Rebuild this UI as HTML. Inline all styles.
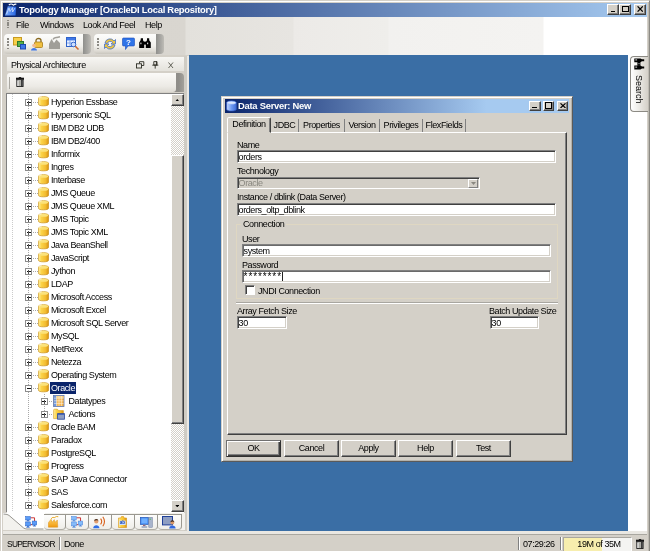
<!DOCTYPE html>
<html><head><meta charset="utf-8"><title>Topology Manager</title>
<style>
html,body{margin:0;padding:0}
body{width:650px;height:551px;overflow:hidden;background:#d4d0c8;position:relative;
 font-family:"Liberation Sans",sans-serif;font-size:9px;letter-spacing:-0.42px;color:#000;line-height:12px}
div,i,svg,span{position:absolute;box-sizing:border-box}
#app{left:0;top:0;width:650px;height:551px;overflow:hidden;background:#d4d0c8;filter:blur(0.3px)}
i{display:block}
.t{white-space:nowrap}
/* main title */
#title{left:3px;top:3px;width:644px;height:14px;background:linear-gradient(90deg,#0a246a 0%,#a6caf0 100%)}
#title .t{left:16px;top:1px;color:#fff;font-weight:bold;font-size:9.4px;letter-spacing:-0.25px}
.cb{width:12px;height:10px;background:#d4d0c8;border:1px solid;border-color:#fff #404040 #404040 #fff;box-shadow:inset -1px -1px 0 #808080}
/* menubar+toolbar gradient */
#bars{left:3px;top:17px;width:644px;height:38px;background:linear-gradient(90deg,#d6d3cd 0px,#d9d6d0 182px,#e3e1dc 183px,#e7e5e1 290px,#eceae7 291px,#efeeeb 385px,#f2f1ef 386px,#f4f3f1 540px,#fff 541px)}
.menu{top:2px;font-size:9px}
.tb{top:17px;height:20px;border-radius:4px 0 0 4px;background:linear-gradient(180deg,#fdfdfc,#f1f0ec 60%,#dedbd4 85%,#c9c6be)}
.tb:after{content:"";position:absolute;right:-8px;top:0;width:8px;height:20px;border-radius:0 4px 4px 0;background:linear-gradient(90deg,#8f8f8c,#a9a8a4 60%,#bebcb6)}
.grip{left:3px;top:4px;width:2px;height:12px;background:repeating-linear-gradient(180deg,#8c8a84 0 1.6px,transparent 1.6px 3.25px)}
/* left panel */
#ph{left:7px;top:57px;width:178px;height:14px;background:linear-gradient(180deg,#f7f6f3,#e4e2dc)}
#ptb{left:7px;top:73px;width:169px;height:19px;border-radius:3px 0 3px 0;background:linear-gradient(180deg,#fbfaf8,#eceae5 70%,#dddad3)}
#ptbs{left:173px;top:73px;width:11px;height:19px;border-radius:0 4px 0 0;background:linear-gradient(90deg,#8f8d89,#8f8d89 50%,#a3a19b)}
#tree{left:6px;top:93px;width:166px;height:419px;background:#fff;border-left:1px solid #808080;border-top:1px solid #808080;overflow:hidden}
#treein{left:-7px;top:-94px;width:200px;height:520px}
.tx{height:13px;line-height:13px;padding:0 1px;white-space:nowrap}
.sel{background:#0a246a;color:#fff;margin-top:-.3px;height:12px;line-height:13.4px}
.ic{display:block}
.hl{height:1px;background:repeating-linear-gradient(90deg,#a8a8a8 0 1px,transparent 1px 2px)}
.vl{width:1px;background:repeating-linear-gradient(180deg,#a8a8a8 0 1px,transparent 1px 2px)}
.bx{width:7px;height:7px;border:1px solid #8c8c8c;background:#fff}
.bx .h{left:.5px;top:2px;width:4px;height:1px;background:#111}
.bx .v{left:2px;top:.5px;width:1px;height:4px;background:#555}
/* scrollbar */
#sb{left:171px;top:94px;width:13px;height:418px;background:repeating-conic-gradient(#fff 0 25%,#d4d0c8 0 50%) 0 0/2px 2px}
.sbb{left:0;width:13px;height:12px;background:#d4d0c8;border:1px solid;border-color:#fff #404040 #404040 #fff;box-shadow:inset -1px -1px 0 #808080}
#thumb{left:0;top:61px;width:13px;height:269px;background:#d4d0c8;border:1px solid;border-color:#fff #404040 #404040 #fff;box-shadow:inset -1px -1px 0 #808080}
/* bottom tabs */
#tabs{left:7px;top:513px;width:178px;height:17px;background:#f3f2ee}
.bt{top:1px;height:16px;border-top:1px solid #9a9890;width:23px;border-right:1px solid #9a9890;border-bottom:1px solid #b0aea6;border-radius:0 0 4px 4px;background:linear-gradient(180deg,#fdfdfc,#efeee9)}
/* desktop */
#desk{left:189px;top:55px;width:439px;height:476px;background:#3a6ea5}
#rstrip{left:628px;top:55px;width:19px;height:476px;background:#fff}
/* status */
#status{left:0;top:536px;width:650px;height:15px}
.ssep{top:1px;width:2px;height:13px;border-left:1px solid #808080;border-right:1px solid #fff}
/* dialog */
#dlg{left:221px;top:96px;width:352px;height:366px;background:#d4d0c8;border:1px solid;border-color:#d4d0c8 #5a5a5a #5a5a5a #d4d0c8;box-shadow:inset 1px 1px 0 #fff,inset -1px -1px 0 #b4b1aa}
#dtitle{left:3px;top:2px;width:344px;height:14px;background:linear-gradient(90deg,#0a246a 0%,#a6caf0 76%,#a6caf0 100%)}
#dtitle .t{left:13px;top:1px;color:#fff;font-weight:bold;font-size:9.4px;letter-spacing:-0.25px}
.dtab{top:22px;height:13px;border-right:1px solid #808080;line-height:13px;text-align:center}
#dtab0{left:5px;top:20px;width:44px;height:16px;background:#d4d0c8;border:1px solid;border-color:#fff #404040 transparent #fff;border-radius:2px 2px 0 0;line-height:13px;text-align:center;box-shadow:inset -1px 0 0 #808080}
#pane{left:5px;top:35px;width:340px;height:303px;border:1px solid;border-color:#fff #404040 #404040 #fff;box-shadow:inset -1px -1px 0 #808080}
.lb{white-space:nowrap}
.in{height:13px;background:#fff;border:1px solid;border-color:#808080 #fff #fff #808080;box-shadow:inset 1px 1px 0 #404040,inset -1px -1px 0 #d4d0c8;line-height:12px;padding-left:.6px;white-space:nowrap}
.btn{top:343px;width:55px;height:17px;border:1px solid;border-color:#fff #404040 #404040 #fff;box-shadow:inset -1px -1px 0 #808080;text-align:center;line-height:14px}
</style></head>
<body>
<div id="app">
<svg width="0" height="0" style="position:absolute"><defs>
 <linearGradient id="gy" x1="0" x2="1" y1="0" y2="0"><stop offset="0" stop-color="#fff0a0"/><stop offset=".3" stop-color="#fbd348"/><stop offset=".7" stop-color="#f3bc30"/><stop offset="1" stop-color="#d8920f"/></linearGradient>
 <linearGradient id="gb" x1="0" x2="1" y1="0" y2="0"><stop offset="0" stop-color="#c4d8ff"/><stop offset=".5" stop-color="#6f9af2"/><stop offset="1" stop-color="#3f6cd8"/></linearGradient>
 <g id="cyl"><path d="M0.4 2.3 C0.4 0.2 10.6 0.2 10.6 2.3 V8.2 C10.6 10.4 0.4 10.4 0.4 8.2 Z" fill="url(#gy)" stroke="#c9901c" stroke-width=".7"/><ellipse cx="5.5" cy="2.3" rx="4.7" ry="1.5" fill="#fbe27a"/><path d="M1.2 2 Q2 1 3.6 .9" stroke="#fffbe0" stroke-width=".9" fill="none"/></g>
 <g id="bcyl"><path d="M0.5 2.5 C0.5 0.3 9.5 0.3 9.5 2.5 V8.5 C9.5 10.7 0.5 10.7 0.5 8.5 Z" fill="url(#gb)" stroke="#2f58c0" stroke-width=".6"/><ellipse cx="5" cy="2.5" rx="4" ry="1.4" fill="#dbe8ff" stroke="#7aa0f0" stroke-width=".4"/></g>
 <g id="dt"><rect x="0.5" y="0.5" width="10.5" height="11" fill="#f5b24a" stroke="#5a78b8" stroke-width=".8"/><rect x="1" y="1" width="2.6" height="10" fill="#6f98e0"/><rect x="3.6" y="1" width="7" height="2" fill="#f8cf80"/><path d="M3.6 1V11M6 1V11M8.4 1V11M1 3.2H10.6M1 5.8H10.6M1 8.4H10.6" stroke="#fdf3dc" stroke-width=".6"/></g>
 <g id="act"><path d="M.6 2.2 Q.6 1.2 1.6 1.2 H4.4 L5.6 2.6 H10.4 V10.6 H.6 Z" fill="url(#gy)" stroke="#d39a1e" stroke-width=".6"/><rect x="4.6" y="5.6" width="6.8" height="5.6" fill="#8e9ec2" stroke="#27479c" stroke-width=".8"/><rect x="5" y="6" width="6" height="1" fill="#4a68b8"/></g>
 <g id="bino"><path d="M1.8 0.3 H4 V2.2 L5.2 4 V10 H0.2 V4.6 L1.6 2.2 Z M8 0.3 H10.2 V2.2 L11.8 4.6 V10 H6.8 V4 L8 2.2 Z" fill="#000"/><rect x="5" y="3.6" width="2" height="3" fill="#000"/><rect x="1.3" y="4.6" width="1.2" height="1.6" fill="#fff" opacity=".8"/><rect x="8" y="4.6" width="1.2" height="1.6" fill="#fff" opacity=".8"/></g>
 <g id="trash"><rect x="0" y=".7" width="8" height="2.1" fill="#151515"/><rect x="2.8" y="0" width="2.4" height="1" fill="#222"/><rect x=".8" y="2.8" width="6.3" height="6.7" fill="#fafafa" stroke="#151515" stroke-width=".9"/><rect x="2.5" y="3.3" width="2.4" height="5.8" fill="#a6a6a0"/><rect x="5.1" y="3" width="1.6" height="6.3" fill="#2a2a2a"/></g>
</defs></svg>

<!-- outer frame highlights -->
<div style="left:0;top:0;width:650px;height:556px;border:1px solid;border-color:#d4d0c8 #8c8a84 #8c8a84 #d4d0c8;box-shadow:inset 1px 1px 0 #fff,inset -1px -1px 0 #bdbab2"></div>

<div id="title">
 <svg style="left:1px;top:0" width="14" height="14" viewBox="0 0 14 14"><defs><linearGradient id="gt" x1="0" x2="1" y1="0" y2="0"><stop offset="0" stop-color="#7fb0ff"/><stop offset="1" stop-color="#2563e0"/></linearGradient></defs><path d="M1 12.4 L3.8 3.2 L12.2 3.8 L11.6 12.4 Z" fill="url(#gt)"/><path d="M2.6 11 L5 5 L6 8.5 L8.6 4.6 L8.6 9 L11 5" stroke="#e8f0ff" stroke-width=".8" fill="none" opacity=".85"/><path d="M4.8 2 Q6.5 .6 8.2 1.2 Q9 1.6 9.6 2.2 Q10.5 1 12.4 1.2" stroke="#fff" stroke-width="1.1" fill="none"/></svg>
 <div class="t">Topology Manager [OracleDI Local Repository]</div>
 <div class="cb" style="left:604.3px;top:1.2px;height:10.4px"><i style="left:2.5px;top:5.6px;width:4.5px;height:1.7px;background:#000"></i></div>
 <div class="cb" style="left:616.2px;top:1.2px;height:10.4px"><i style="left:1.6px;top:.8px;width:7.2px;height:6.4px;border:1px solid #000;border-top-width:1.6px"></i></div>
 <div class="cb" style="left:630.8px;top:1.2px;height:10.4px"><svg style="left:2px;top:1.2px" width="6.4" height="6" viewBox="0 0 6.4 6"><path d="M.6 .4L5.8 5.6M5.8 .4L.6 5.6" stroke="#000" stroke-width="1.3"/></svg></div>
</div>

<div id="bars">
 <i style="left:4px;top:3.4px;width:1.8px;height:8.4px;background:repeating-linear-gradient(180deg,#8c8a84 0 1.3px,transparent 1.3px 2.25px)"></i>
 <div class="t menu" style="left:13px">File</div>
 <div class="t menu" style="left:37px">Windows</div>
 <div class="t menu" style="left:80px">Look And Feel</div>
 <div class="t menu" style="left:142px">Help</div>
 <div class="tb" style="left:1px;width:79px"><i class="grip"></i>
  <svg style="left:9px;top:3px" width="14" height="13" viewBox="0 0 14 13"><rect x=".5" y=".5" width="8" height="7.5" fill="#f7d04a" stroke="#c89a20"/><rect x="4.5" y="4.5" width="6" height="5" fill="#59b04a" stroke="#2f7a2a"/><rect x="7.5" y="7.5" width="5" height="4.5" fill="#3f78e8" stroke="#1d48b0"/></svg>
  <svg style="left:27px;top:3px" width="13" height="14" viewBox="0 0 13 14"><path d="M5 6 V3.5 C5 0.8 10 0.8 10 3.5 V6" fill="none" stroke="#8a6a20" stroke-width="1.3"/><rect x="3.5" y="5" width="8" height="5.5" rx="1" fill="#f0c040" stroke="#a87c18" stroke-width=".8"/><circle cx="3" cy="8.5" r="1.8" fill="#f0b890"/><path d="M0 13.5 C0 10 6 10 6 13.5 Z" fill="#3f78e8"/></svg>
  <svg style="left:44px;top:2px" width="14" height="14" viewBox="0 0 14 14"><path d="M1 13 V8 L3.5 3 L6 7 L8.5 3.5 L12 7 V13 Z" fill="#a09e98"/><path d="M5 3.5 Q6 1 9 1.5 L12 0.8" stroke="#a09e98" stroke-width="1.5" fill="none"/></svg>
  <svg style="left:62px;top:3px" width="14" height="14" viewBox="0 0 14 14"><rect x=".5" y=".5" width="9" height="9" fill="#e8f0ff" stroke="#2f62c8"/><rect x="1" y="1" width="8" height="2.4" fill="#3f78e8"/><path d="M1 6H9M4 3.5V9" stroke="#6f98e8" stroke-width=".8"/><circle cx="7.5" cy="7.5" r="2.3" fill="#cfe0ff" stroke="#2f62c8" stroke-width=".9"/><path d="M9.3 9.3 L12.5 12.5" stroke="#d06a30" stroke-width="1.6"/></svg>
 </div>
 <div class="tb" style="left:91px;width:62px"><i class="grip"></i>
  <svg style="left:9px;top:3px" width="14" height="14" viewBox="0 0 14 14"><path d="M2 6 A5 5 0 0 1 11 4 L12.5 2.5 V7 H8 L9.6 5.4 A3.2 3.2 0 0 0 4.2 6.5 Z" fill="#f3c83a" stroke="#3f6fd0" stroke-width=".8"/><path d="M12 8 A5 5 0 0 1 3 10 L1.5 11.5 V7 H6 L4.4 8.6 A3.2 3.2 0 0 0 9.8 7.5 Z" fill="#f3c83a" stroke="#3f6fd0" stroke-width=".8"/></svg>
  <svg style="left:28px;top:3px" width="13" height="14" viewBox="0 0 13 14"><path d="M1.5 1 H11.5 Q12.5 1 12.5 2 V8 Q12.5 9 11.5 9 H6 L3.5 12.5 V9 H1.5 Q.5 9 .5 8 V2 Q.5 1 1.5 1Z" fill="#2f74e8" stroke="#1b4cb8" stroke-width=".6"/><text x="6.5" y="7.8" font-family="Liberation Sans,sans-serif" font-size="8" font-weight="bold" fill="#fff" text-anchor="middle" letter-spacing="0">?</text></svg>
  <svg style="left:44.5px;top:3.5px" width="12" height="10.5" viewBox="0 0 12 10.5"><use href="#bino"/></svg>
 </div>
</div>

<!-- left panel -->
<div id="ph" style="height:13.5px"><div class="t" style="left:4px;top:1.6px">Physical Architecture</div>
 <svg style="left:129px;top:4px" width="9" height="8" viewBox="0 0 9 8"><path d="M3.5 2.5V.7H7.8V4.5H6" fill="none" stroke="#2a2a20" stroke-width=".9"/><rect x=".5" y="2.8" width="5" height="4.2" fill="none" stroke="#2a2a20" stroke-width=".9"/></svg>
 <svg style="left:145px;top:4px" width="7" height="8" viewBox="0 0 7 8"><path d="M1.8 .6H5V4H1.8Z" fill="none" stroke="#2a2a20" stroke-width=".9"/><path d="M.3 4.2H6.3M3.2 4.2V7.6M4.4 .6V4" stroke="#2a2a20" stroke-width=".9"/></svg>
 <svg style="left:161px;top:5px" width="6" height="7" viewBox="0 0 6 7"><path d="M.5 .5L5 6M5 .5L.5 6" stroke="#55554a" stroke-width=".9"/></svg>
</div>
<div id="ptbs"></div>
<div id="ptb"><i style="left:2.3px;top:4.4px;width:1px;height:11.6px;background:#aaa8a2"></i>
 <svg style="left:9px;top:4px" width="8" height="10" viewBox="0 0 8 10"><use href="#trash"/></svg>
</div>
<div id="tree"><div id="treein">
 <div class="vl" style="left:12px;top:94px;height:420px;opacity:.6"></div>
 <div class="vl" style="left:28px;top:94px;height:420px"></div>
 <div class="vl" style="left:43.5px;top:394px;height:24px"></div>
 <svg class="ic" style="left:38px;top:83.2px" width="11" height="10.5" viewBox="0 0 11 10.5"><use href="#cyl"/></svg>
<div class="hl" style="left:29px;top:102px;width:9px"></div>
<div class="bx" style="left:25px;top:99px"><i class="h"></i><i class="v"></i></div>
<svg class="ic" style="left:38px;top:96.2px" width="11" height="10.5" viewBox="0 0 11 10.5"><use href="#cyl"/></svg>
<div class="tx" style="left:50px;top:96px">Hyperion Essbase</div>
<div class="hl" style="left:29px;top:115px;width:9px"></div>
<div class="bx" style="left:25px;top:112px"><i class="h"></i><i class="v"></i></div>
<svg class="ic" style="left:38px;top:109.2px" width="11" height="10.5" viewBox="0 0 11 10.5"><use href="#cyl"/></svg>
<div class="tx" style="left:50px;top:109px">Hypersonic SQL</div>
<div class="hl" style="left:29px;top:128px;width:9px"></div>
<div class="bx" style="left:25px;top:125px"><i class="h"></i><i class="v"></i></div>
<svg class="ic" style="left:38px;top:122.2px" width="11" height="10.5" viewBox="0 0 11 10.5"><use href="#cyl"/></svg>
<div class="tx" style="left:50px;top:122px">IBM DB2 UDB</div>
<div class="hl" style="left:29px;top:141px;width:9px"></div>
<div class="bx" style="left:25px;top:138px"><i class="h"></i><i class="v"></i></div>
<svg class="ic" style="left:38px;top:135.2px" width="11" height="10.5" viewBox="0 0 11 10.5"><use href="#cyl"/></svg>
<div class="tx" style="left:50px;top:135px">IBM DB2/400</div>
<div class="hl" style="left:29px;top:154px;width:9px"></div>
<div class="bx" style="left:25px;top:151px"><i class="h"></i><i class="v"></i></div>
<svg class="ic" style="left:38px;top:148.2px" width="11" height="10.5" viewBox="0 0 11 10.5"><use href="#cyl"/></svg>
<div class="tx" style="left:50px;top:148px">Informix</div>
<div class="hl" style="left:29px;top:167px;width:9px"></div>
<div class="bx" style="left:25px;top:164px"><i class="h"></i><i class="v"></i></div>
<svg class="ic" style="left:38px;top:161.2px" width="11" height="10.5" viewBox="0 0 11 10.5"><use href="#cyl"/></svg>
<div class="tx" style="left:50px;top:161px">Ingres</div>
<div class="hl" style="left:29px;top:180px;width:9px"></div>
<div class="bx" style="left:25px;top:177px"><i class="h"></i><i class="v"></i></div>
<svg class="ic" style="left:38px;top:174.2px" width="11" height="10.5" viewBox="0 0 11 10.5"><use href="#cyl"/></svg>
<div class="tx" style="left:50px;top:174px">Interbase</div>
<div class="hl" style="left:29px;top:193px;width:9px"></div>
<div class="bx" style="left:25px;top:190px"><i class="h"></i><i class="v"></i></div>
<svg class="ic" style="left:38px;top:187.2px" width="11" height="10.5" viewBox="0 0 11 10.5"><use href="#cyl"/></svg>
<div class="tx" style="left:50px;top:187px">JMS Queue</div>
<div class="hl" style="left:29px;top:206px;width:9px"></div>
<div class="bx" style="left:25px;top:203px"><i class="h"></i><i class="v"></i></div>
<svg class="ic" style="left:38px;top:200.2px" width="11" height="10.5" viewBox="0 0 11 10.5"><use href="#cyl"/></svg>
<div class="tx" style="left:50px;top:200px">JMS Queue XML</div>
<div class="hl" style="left:29px;top:219px;width:9px"></div>
<div class="bx" style="left:25px;top:216px"><i class="h"></i><i class="v"></i></div>
<svg class="ic" style="left:38px;top:213.2px" width="11" height="10.5" viewBox="0 0 11 10.5"><use href="#cyl"/></svg>
<div class="tx" style="left:50px;top:213px">JMS Topic</div>
<div class="hl" style="left:29px;top:232px;width:9px"></div>
<div class="bx" style="left:25px;top:229px"><i class="h"></i><i class="v"></i></div>
<svg class="ic" style="left:38px;top:226.2px" width="11" height="10.5" viewBox="0 0 11 10.5"><use href="#cyl"/></svg>
<div class="tx" style="left:50px;top:226px">JMS Topic XML</div>
<div class="hl" style="left:29px;top:245px;width:9px"></div>
<div class="bx" style="left:25px;top:242px"><i class="h"></i><i class="v"></i></div>
<svg class="ic" style="left:38px;top:239.2px" width="11" height="10.5" viewBox="0 0 11 10.5"><use href="#cyl"/></svg>
<div class="tx" style="left:50px;top:239px">Java BeanShell</div>
<div class="hl" style="left:29px;top:258px;width:9px"></div>
<div class="bx" style="left:25px;top:255px"><i class="h"></i><i class="v"></i></div>
<svg class="ic" style="left:38px;top:252.2px" width="11" height="10.5" viewBox="0 0 11 10.5"><use href="#cyl"/></svg>
<div class="tx" style="left:50px;top:252px">JavaScript</div>
<div class="hl" style="left:29px;top:271px;width:9px"></div>
<div class="bx" style="left:25px;top:268px"><i class="h"></i><i class="v"></i></div>
<svg class="ic" style="left:38px;top:265.2px" width="11" height="10.5" viewBox="0 0 11 10.5"><use href="#cyl"/></svg>
<div class="tx" style="left:50px;top:265px">Jython</div>
<div class="hl" style="left:29px;top:284px;width:9px"></div>
<div class="bx" style="left:25px;top:281px"><i class="h"></i><i class="v"></i></div>
<svg class="ic" style="left:38px;top:278.2px" width="11" height="10.5" viewBox="0 0 11 10.5"><use href="#cyl"/></svg>
<div class="tx" style="left:50px;top:278px">LDAP</div>
<div class="hl" style="left:29px;top:297px;width:9px"></div>
<div class="bx" style="left:25px;top:294px"><i class="h"></i><i class="v"></i></div>
<svg class="ic" style="left:38px;top:291.2px" width="11" height="10.5" viewBox="0 0 11 10.5"><use href="#cyl"/></svg>
<div class="tx" style="left:50px;top:291px">Microsoft Access</div>
<div class="hl" style="left:29px;top:310px;width:9px"></div>
<div class="bx" style="left:25px;top:307px"><i class="h"></i><i class="v"></i></div>
<svg class="ic" style="left:38px;top:304.2px" width="11" height="10.5" viewBox="0 0 11 10.5"><use href="#cyl"/></svg>
<div class="tx" style="left:50px;top:304px">Microsoft Excel</div>
<div class="hl" style="left:29px;top:323px;width:9px"></div>
<div class="bx" style="left:25px;top:320px"><i class="h"></i><i class="v"></i></div>
<svg class="ic" style="left:38px;top:317.2px" width="11" height="10.5" viewBox="0 0 11 10.5"><use href="#cyl"/></svg>
<div class="tx" style="left:50px;top:317px">Microsoft SQL Server</div>
<div class="hl" style="left:29px;top:336px;width:9px"></div>
<div class="bx" style="left:25px;top:333px"><i class="h"></i><i class="v"></i></div>
<svg class="ic" style="left:38px;top:330.2px" width="11" height="10.5" viewBox="0 0 11 10.5"><use href="#cyl"/></svg>
<div class="tx" style="left:50px;top:330px">MySQL</div>
<div class="hl" style="left:29px;top:349px;width:9px"></div>
<div class="bx" style="left:25px;top:346px"><i class="h"></i><i class="v"></i></div>
<svg class="ic" style="left:38px;top:343.2px" width="11" height="10.5" viewBox="0 0 11 10.5"><use href="#cyl"/></svg>
<div class="tx" style="left:50px;top:343px">NetRexx</div>
<div class="hl" style="left:29px;top:362px;width:9px"></div>
<div class="bx" style="left:25px;top:359px"><i class="h"></i><i class="v"></i></div>
<svg class="ic" style="left:38px;top:356.2px" width="11" height="10.5" viewBox="0 0 11 10.5"><use href="#cyl"/></svg>
<div class="tx" style="left:50px;top:356px">Netezza</div>
<div class="hl" style="left:29px;top:375px;width:9px"></div>
<div class="bx" style="left:25px;top:372px"><i class="h"></i><i class="v"></i></div>
<svg class="ic" style="left:38px;top:369.2px" width="11" height="10.5" viewBox="0 0 11 10.5"><use href="#cyl"/></svg>
<div class="tx" style="left:50px;top:369px">Operating System</div>
<div class="hl" style="left:29px;top:388px;width:9px"></div>
<div class="bx" style="left:25px;top:385px"><i class="h"></i></div>
<svg class="ic" style="left:38px;top:382.2px" width="11" height="10.5" viewBox="0 0 11 10.5"><use href="#cyl"/></svg>
<div class="tx sel" style="left:50px;top:382px">Oracle</div>
<div class="hl" style="left:47px;top:401px;width:6px"></div>
<div class="bx" style="left:40.5px;top:398px"><i class="h"></i><i class="v"></i></div>
<svg class="ic" style="left:53px;top:395px" width="12" height="12" viewBox="0 0 12 12"><use href="#dt"/></svg>
<div class="tx" style="left:67.5px;top:395px">Datatypes</div>
<div class="hl" style="left:47px;top:414px;width:6px"></div>
<div class="bx" style="left:40.5px;top:411px"><i class="h"></i><i class="v"></i></div>
<svg class="ic" style="left:53px;top:408px" width="12" height="12" viewBox="0 0 12 12"><use href="#act"/></svg>
<div class="tx" style="left:67.5px;top:408px">Actions</div>
<div class="hl" style="left:29px;top:427px;width:9px"></div>
<div class="bx" style="left:25px;top:424px"><i class="h"></i><i class="v"></i></div>
<svg class="ic" style="left:38px;top:421.2px" width="11" height="10.5" viewBox="0 0 11 10.5"><use href="#cyl"/></svg>
<div class="tx" style="left:50px;top:421px">Oracle BAM</div>
<div class="hl" style="left:29px;top:440px;width:9px"></div>
<div class="bx" style="left:25px;top:437px"><i class="h"></i><i class="v"></i></div>
<svg class="ic" style="left:38px;top:434.2px" width="11" height="10.5" viewBox="0 0 11 10.5"><use href="#cyl"/></svg>
<div class="tx" style="left:50px;top:434px">Paradox</div>
<div class="hl" style="left:29px;top:453px;width:9px"></div>
<div class="bx" style="left:25px;top:450px"><i class="h"></i><i class="v"></i></div>
<svg class="ic" style="left:38px;top:447.2px" width="11" height="10.5" viewBox="0 0 11 10.5"><use href="#cyl"/></svg>
<div class="tx" style="left:50px;top:447px">PostgreSQL</div>
<div class="hl" style="left:29px;top:466px;width:9px"></div>
<div class="bx" style="left:25px;top:463px"><i class="h"></i><i class="v"></i></div>
<svg class="ic" style="left:38px;top:460.2px" width="11" height="10.5" viewBox="0 0 11 10.5"><use href="#cyl"/></svg>
<div class="tx" style="left:50px;top:460px">Progress</div>
<div class="hl" style="left:29px;top:479px;width:9px"></div>
<div class="bx" style="left:25px;top:476px"><i class="h"></i><i class="v"></i></div>
<svg class="ic" style="left:38px;top:473.2px" width="11" height="10.5" viewBox="0 0 11 10.5"><use href="#cyl"/></svg>
<div class="tx" style="left:50px;top:473px">SAP Java Connector</div>
<div class="hl" style="left:29px;top:492px;width:9px"></div>
<div class="bx" style="left:25px;top:489px"><i class="h"></i><i class="v"></i></div>
<svg class="ic" style="left:38px;top:486.2px" width="11" height="10.5" viewBox="0 0 11 10.5"><use href="#cyl"/></svg>
<div class="tx" style="left:50px;top:486px">SAS</div>
<div class="hl" style="left:29px;top:505px;width:9px"></div>
<div class="bx" style="left:25px;top:502px"><i class="h"></i><i class="v"></i></div>
<svg class="ic" style="left:38px;top:499.2px" width="11" height="10.5" viewBox="0 0 11 10.5"><use href="#cyl"/></svg>
<div class="tx" style="left:50px;top:499px">Salesforce.com</div>
</div></div>
<div style="left:6px;top:93px;width:178px;height:1px;background:#808080"></div>
<div id="sb">
 <div class="sbb" style="top:0"><svg style="left:2.8px;top:3.6px" width="4.6" height="2.4" viewBox="0 0 5 3"><path d="M0 3L2.5 0L5 3Z" fill="#000"/></svg></div>
 <div id="thumb"></div>
 <div class="sbb" style="top:405.6px"><svg style="left:2.8px;top:4px" width="4.6" height="2.4" viewBox="0 0 5 3"><path d="M0 0L2.5 3L5 0Z" fill="#000"/></svg></div>
</div>
<div style="left:184px;top:56px;width:2.5px;height:475px;background:#cfccc4"></div>
<div style="left:186.5px;top:56px;width:2.5px;height:475px;background:#ebe9e5"></div>

<div style="left:3px;top:513px;width:4px;height:17px;background:#f3f2ee"></div>
<div style="left:7px;top:512px;width:177px;height:1.5px;background:#fff"></div>
<div id="tabs">
 <svg style="left:-4px;top:0" width="42" height="17" viewBox="-4 0 42 17"><path d="M-4 0 H38 V16 H20 Q17.8 16 16.4 14.8 L2 2.4 Q0.8 1.2 -4 1 Z" fill="#fff"/><path d="M-3.5 1 Q0.8 1.2 2 2.4 L16.4 14.8 Q17.8 16 20 16 H36.5" fill="none" stroke="#8c8a84" stroke-width=".9"/></svg>
 <div class="bt" style="left:36.5px;width:22.5px"></div><div class="bt" style="left:59px;width:22.6px"></div><div class="bt" style="left:81.6px;width:23.4px"></div><div class="bt" style="left:105px;width:23.4px"></div><div class="bt" style="left:128.4px;width:22.8px"></div><div class="bt" style="left:151.2px;width:23.7px"></div>
 <!-- tab icons -->
 <svg style="left:17.8px;top:3.2px" width="12.6" height="12.6" viewBox="0 0 14 14"><path d="M6 2H10.6V6M6 9.6H8" stroke="#c42222" stroke-width="1" fill="none"/><g fill="#5a9cf8" stroke="#2a64c8" stroke-width=".6"><rect x=".8" y=".6" width="5" height="3.8"/><rect x=".6" y="6.6" width="5.4" height="4.4"/><rect x="8" y="5.6" width="5" height="4.4"/></g><g fill="#2a64c8"><rect x="2.4" y="4.4" width="1.8" height="1"/><rect x="1.6" y="5.2" width="3.4" height=".7"/><rect x="2.4" y="11" width="1.8" height="1.2"/><rect x="1.4" y="12.1" width="3.8" height=".8"/><rect x="9.6" y="10" width="1.8" height="1"/><rect x="8.8" y="10.9" width="3.4" height=".7"/></g></svg>
 <svg style="left:41.3px;top:3.2px" width="10.8" height="11.7" viewBox="0 0 12 13"><defs><linearGradient id="gf" x1="0" x2="0" y1="0" y2="1"><stop offset="0" stop-color="#ffd060"/><stop offset="1" stop-color="#f09a10"/></linearGradient></defs><path d="M.4 12.4 V7.4 L3.4 3.6 L4.6 7 L7 4 L8 7 L10.4 4.4 L10.8 12.4 Z" fill="url(#gf)" stroke="#d88a10" stroke-width=".5"/><path d="M3.6 3.2 Q4.4 1 6.6 1.6 Q7.6 2 8.2 1.2 Q9.2 .2 11.4 .8" stroke="#e8a820" stroke-width="1.1" fill="none"/></svg>
 <svg style="left:64.1px;top:3.2px" width="12.6" height="12.6" viewBox="0 0 14 14"><path d="M6 2H10.6V6M6 9.6H8" stroke="#c42222" stroke-width="1" fill="none"/><g fill="#86bcfa" stroke="#4a86dc" stroke-width=".6"><rect x=".8" y=".6" width="5" height="3.8"/><rect x=".6" y="6.6" width="5.4" height="4.4"/><rect x="8" y="5.6" width="5" height="4.4"/></g><g fill="#4a86dc"><rect x="2.4" y="4.4" width="1.8" height="1"/><rect x="1.6" y="5.2" width="3.4" height=".7"/><rect x="2.4" y="11" width="1.8" height="1.2"/><rect x="1.4" y="12.1" width="3.8" height=".8"/><rect x="9.6" y="10" width="1.8" height="1"/><rect x="8.8" y="10.9" width="3.4" height=".7"/></g></svg>
 <svg style="left:86px;top:3px" width="13" height="12.5" viewBox="0 0 13 12.5"><path d="M.2 12.3 C.2 8.2 6.4 8.2 6.4 12.3 Z" fill="#2f6fe8"/><circle cx="3.3" cy="5.4" r="2.1" fill="#e3a070"/><path d="M1.1 5 Q1.3 2.8 3.4 2.9 Q5.4 3 5.4 4.6 Q3.4 3.8 1.1 5Z" fill="#4a3020"/><path d="M7.6 2.6 Q9.8 5.5 7.6 8.4 M9.8 .8 Q13.2 5.5 9.8 10.2" stroke="#d8601a" stroke-width="1.1" fill="none"/></svg>
 <svg style="left:111.3px;top:3.4px" width="9" height="12" viewBox="0 0 9 12"><path d="M.5 2 H2.8 L3.5 .5 H5.5 L6.2 2 H8.5 V11.5 H.5 Z" fill="url(#gy)" stroke="#d8920f" stroke-width=".6"/><rect x="1.3" y="4.6" width="6.4" height="4.4" fill="#cfe0ff"/><text x="4.5" y="8.3" font-family="Liberation Sans,sans-serif" font-size="4.6" font-weight="bold" fill="#1f48b0" text-anchor="middle" letter-spacing="0">ab</text></svg>
 <svg style="left:132.5px;top:4px" width="13" height="12" viewBox="0 0 13 12"><rect x=".4" y=".4" width="8" height="7" fill="#3f88f0" stroke="#2458b8" stroke-width=".7"/><rect x="1.4" y="1.4" width="6" height="5" fill="#6fb0ff"/><rect x="3.2" y="7.4" width="2.4" height="1.8" fill="#7a8aa8"/><rect x="1.6" y="9.2" width="5.6" height="1.6" fill="#9aa6c0"/><rect x="3.4" y="8" width="1" height=".9" fill="#d03030"/><rect x="8.8" y=".3" width="3.6" height="10" fill="#a8b4cc" stroke="#7080a0" stroke-width=".5"/><rect x="9.7" y="1.7" width="1.1" height="1" fill="#30c040"/></svg>
 <svg style="left:154.9px;top:3px" width="14" height="12.5" viewBox="0 0 14 12.5"><rect x=".5" y=".5" width="10" height="8.4" fill="#8e9ec2" stroke="#1f3f98" stroke-width="1"/><path d="M7.2 12.4 C7.2 8.6 13.6 8.6 13.6 12.4 Z" fill="#2f68e0"/><circle cx="10.4" cy="6.6" r="1.9" fill="#d89868"/><path d="M8.4 6.2 Q8.6 4.2 10.5 4.3 Q12.3 4.4 12.3 5.9 Q10.4 5.2 8.4 6.2Z" fill="#3a2418"/></svg>
</div>

<div id="desk"></div>
<div id="rstrip"></div>
<!-- search vertical tab -->
<div style="left:630px;top:56px;width:18px;height:56px;border:1px solid #8c8a84;border-right:0;border-radius:4px 0 0 4px;background:linear-gradient(90deg,#fff,#efeeea 40%,#d4d0c8)">
 <svg style="left:3px;top:1.4px" width="10.5" height="12" viewBox="0 0 10.5 12"><path d="M0.3 0.6 H6.4 L8 1.3 H10.2 V3.3 H8 L6.4 4.2 H0.3 Z M0.3 7.6 H6.4 L8 8.5 H10.2 V10.5 H8 L6.4 11.4 H0.3 Z" fill="#000"/><rect x="3.4" y="4" width="3" height="3.8" fill="#000"/><rect x="1.3" y="1.4" width="1.8" height="1" fill="#fff" opacity=".85"/><rect x="1.3" y="8.6" width="1.8" height="1" fill="#fff" opacity=".85"/><rect x="4.3" y="5.2" width="1.4" height="1" fill="#fff" opacity=".7"/></svg>
 <div class="t" style="left:2px;top:18px;width:12px;height:30px;writing-mode:vertical-rl;line-height:12px;font-size:9px;letter-spacing:0">Search</div>
</div>

<div style="left:3px;top:531px;width:644px;height:2.6px;background:#e9e7e2"></div>
<div style="left:3px;top:534px;width:644px;height:1px;background:#a9a7a0"></div>
<!-- status bar -->
<div id="status">
 <div class="t" style="left:7px;top:2px;letter-spacing:-0.7px;font-size:8.4px">SUPERVISOR</div>
 <i class="ssep" style="left:59px"></i>
 <div class="t" style="left:64px;top:2px">Done</div>
 <i class="ssep" style="left:518px"></i>
 <div class="t" style="left:523px;top:2px">07:29:26</div>
 <i class="ssep" style="left:560px"></i>
 <div style="left:563px;top:1px;width:69px;height:15px;background:linear-gradient(90deg,#f7eeae 0 38px,#f4f4f2 38px);border:1px solid;border-color:#a8a6a0 #fff #fff #a8a6a0;text-align:center;line-height:12px;padding-left:3px" class="t">19M of 35M</div>
 <svg style="left:636px;top:3.2px" width="8" height="10" viewBox="0 0 8 10"><use href="#trash"/></svg>
</div>

<!-- dialog -->
<div id="dlg">
 <div id="dtitle">
  <svg style="left:1px;top:1px" width="11" height="12" viewBox="0 0 10 11"><use href="#bcyl"/></svg>
  <div class="t">Data Server: New</div>
  <div class="cb" style="left:304.3px;top:1.5px;width:11.6px;height:10px"><i style="left:2px;top:5.2px;width:4.6px;height:1.8px;background:#000"></i></div>
  <div class="cb" style="left:317.9px;top:1.5px;width:11.6px;height:10px"><i style="left:1.3px;top:.6px;width:7px;height:6.6px;border:1px solid #000;border-top-width:1.6px"></i></div>
  <div class="cb" style="left:331.8px;top:1.5px;width:11.6px;height:10px"><svg style="left:2px;top:1.3px" width="6" height="5.4" viewBox="0 0 6 5.4"><path d="M.5 .4L5.5 5M5.5 .4L.5 5" stroke="#000" stroke-width="1.2"/></svg></div>
 </div>
 <div id="pane"></div>
 <div id="dtab0" class="t">Definition</div>
 <div class="dtab t" style="left:49px;width:28px">JDBC</div>
 <div class="dtab t" style="left:77px;width:46px">Properties</div>
 <div class="dtab t" style="left:123px;width:35px">Version</div>
 <div class="dtab t" style="left:158px;width:43px">Privileges</div>
 <div class="dtab t" style="left:201px;width:43px">FlexFields</div>

 <div class="lb" style="left:15px;top:42px">Name</div>
 <div class="in" style="left:15px;top:53px;width:319px">orders</div>
 <div class="lb" style="left:15px;top:68px">Technology</div>
 <div class="in" style="left:15px;top:80px;width:243px;height:12px;background:#d4d0c8;color:#8a8880;line-height:10px">Oracle
   <div style="left:230px;top:1px;width:10px;height:9px;background:#d4d0c8;border:1px solid;border-color:#fff #808080 #808080 #fff"><svg style="left:2px;top:2px" width="5" height="3" viewBox="0 0 5 3"><path d="M0 0L2.5 3L5 0Z" fill="#8a8880"/></svg></div>
 </div>
 <div class="lb" style="left:15px;top:94px">Instance / dblink (Data Server)</div>
 <div class="in" style="left:15px;top:106px;width:319px">orders_oltp_dblink</div>

 <div style="left:14px;top:127px;width:322px;height:75px;border:1px solid #dfd7c2"></div>
 <div class="lb" style="left:19px;top:121px;background:#d4d0c8;padding:0 2px">Connection</div>
 <div class="lb" style="left:20px;top:136px">User</div>
 <div class="in" style="left:20px;top:147px;width:309px;box-shadow:inset 1px 1px 0 #6a6a6a,inset -1px -1px 0 #d4d0c8">system</div>
 <div class="lb" style="left:20px;top:162px">Password</div>
 <div class="in" style="left:20px;top:173px;width:309px;box-shadow:inset 1px 1px 0 #6a6a6a,inset -1px -1px 0 #d4d0c8"><span style="position:static;letter-spacing:0.9px;font-size:10px;line-height:8px">********</span><span style="position:static;display:inline-block;width:.8px;height:9px;background:#222;vertical-align:-1px"></span></div>
 <div style="left:23px;top:188px;width:10px;height:10px;background:#fff;border:1px solid;border-color:#808080 #fff #fff #808080;box-shadow:inset 1px 1px 0 #404040"></div>
 <div class="lb" style="left:36px;top:188px">JNDI Connection</div>

 <div style="left:14px;top:205px;width:322px;height:2px;border-top:1px solid #a8a6a0;border-bottom:1px solid #fff"></div>
 <div class="lb" style="left:15px;top:208px">Array Fetch Size</div>
 <div class="in" style="left:15px;top:219px;width:50px">30</div>
 <div class="lb" style="left:267px;top:208px">Batch Update Size</div>
 <div class="in" style="left:268px;top:219px;width:49px">30</div>

 <div class="btn" style="left:4px;border-color:#707070 #303030 #303030 #707070;box-shadow:inset 1px 1px 0 #fff,inset -1px -1px 0 #404040,inset -2px -2px 0 #808080">OK</div>
 <div class="btn" style="left:62px">Cancel</div>
 <div class="btn" style="left:119px">Apply</div>
 <div class="btn" style="left:176px">Help</div>
 <div class="btn" style="left:234px">Test</div>
</div>
</div>
</body></html>
